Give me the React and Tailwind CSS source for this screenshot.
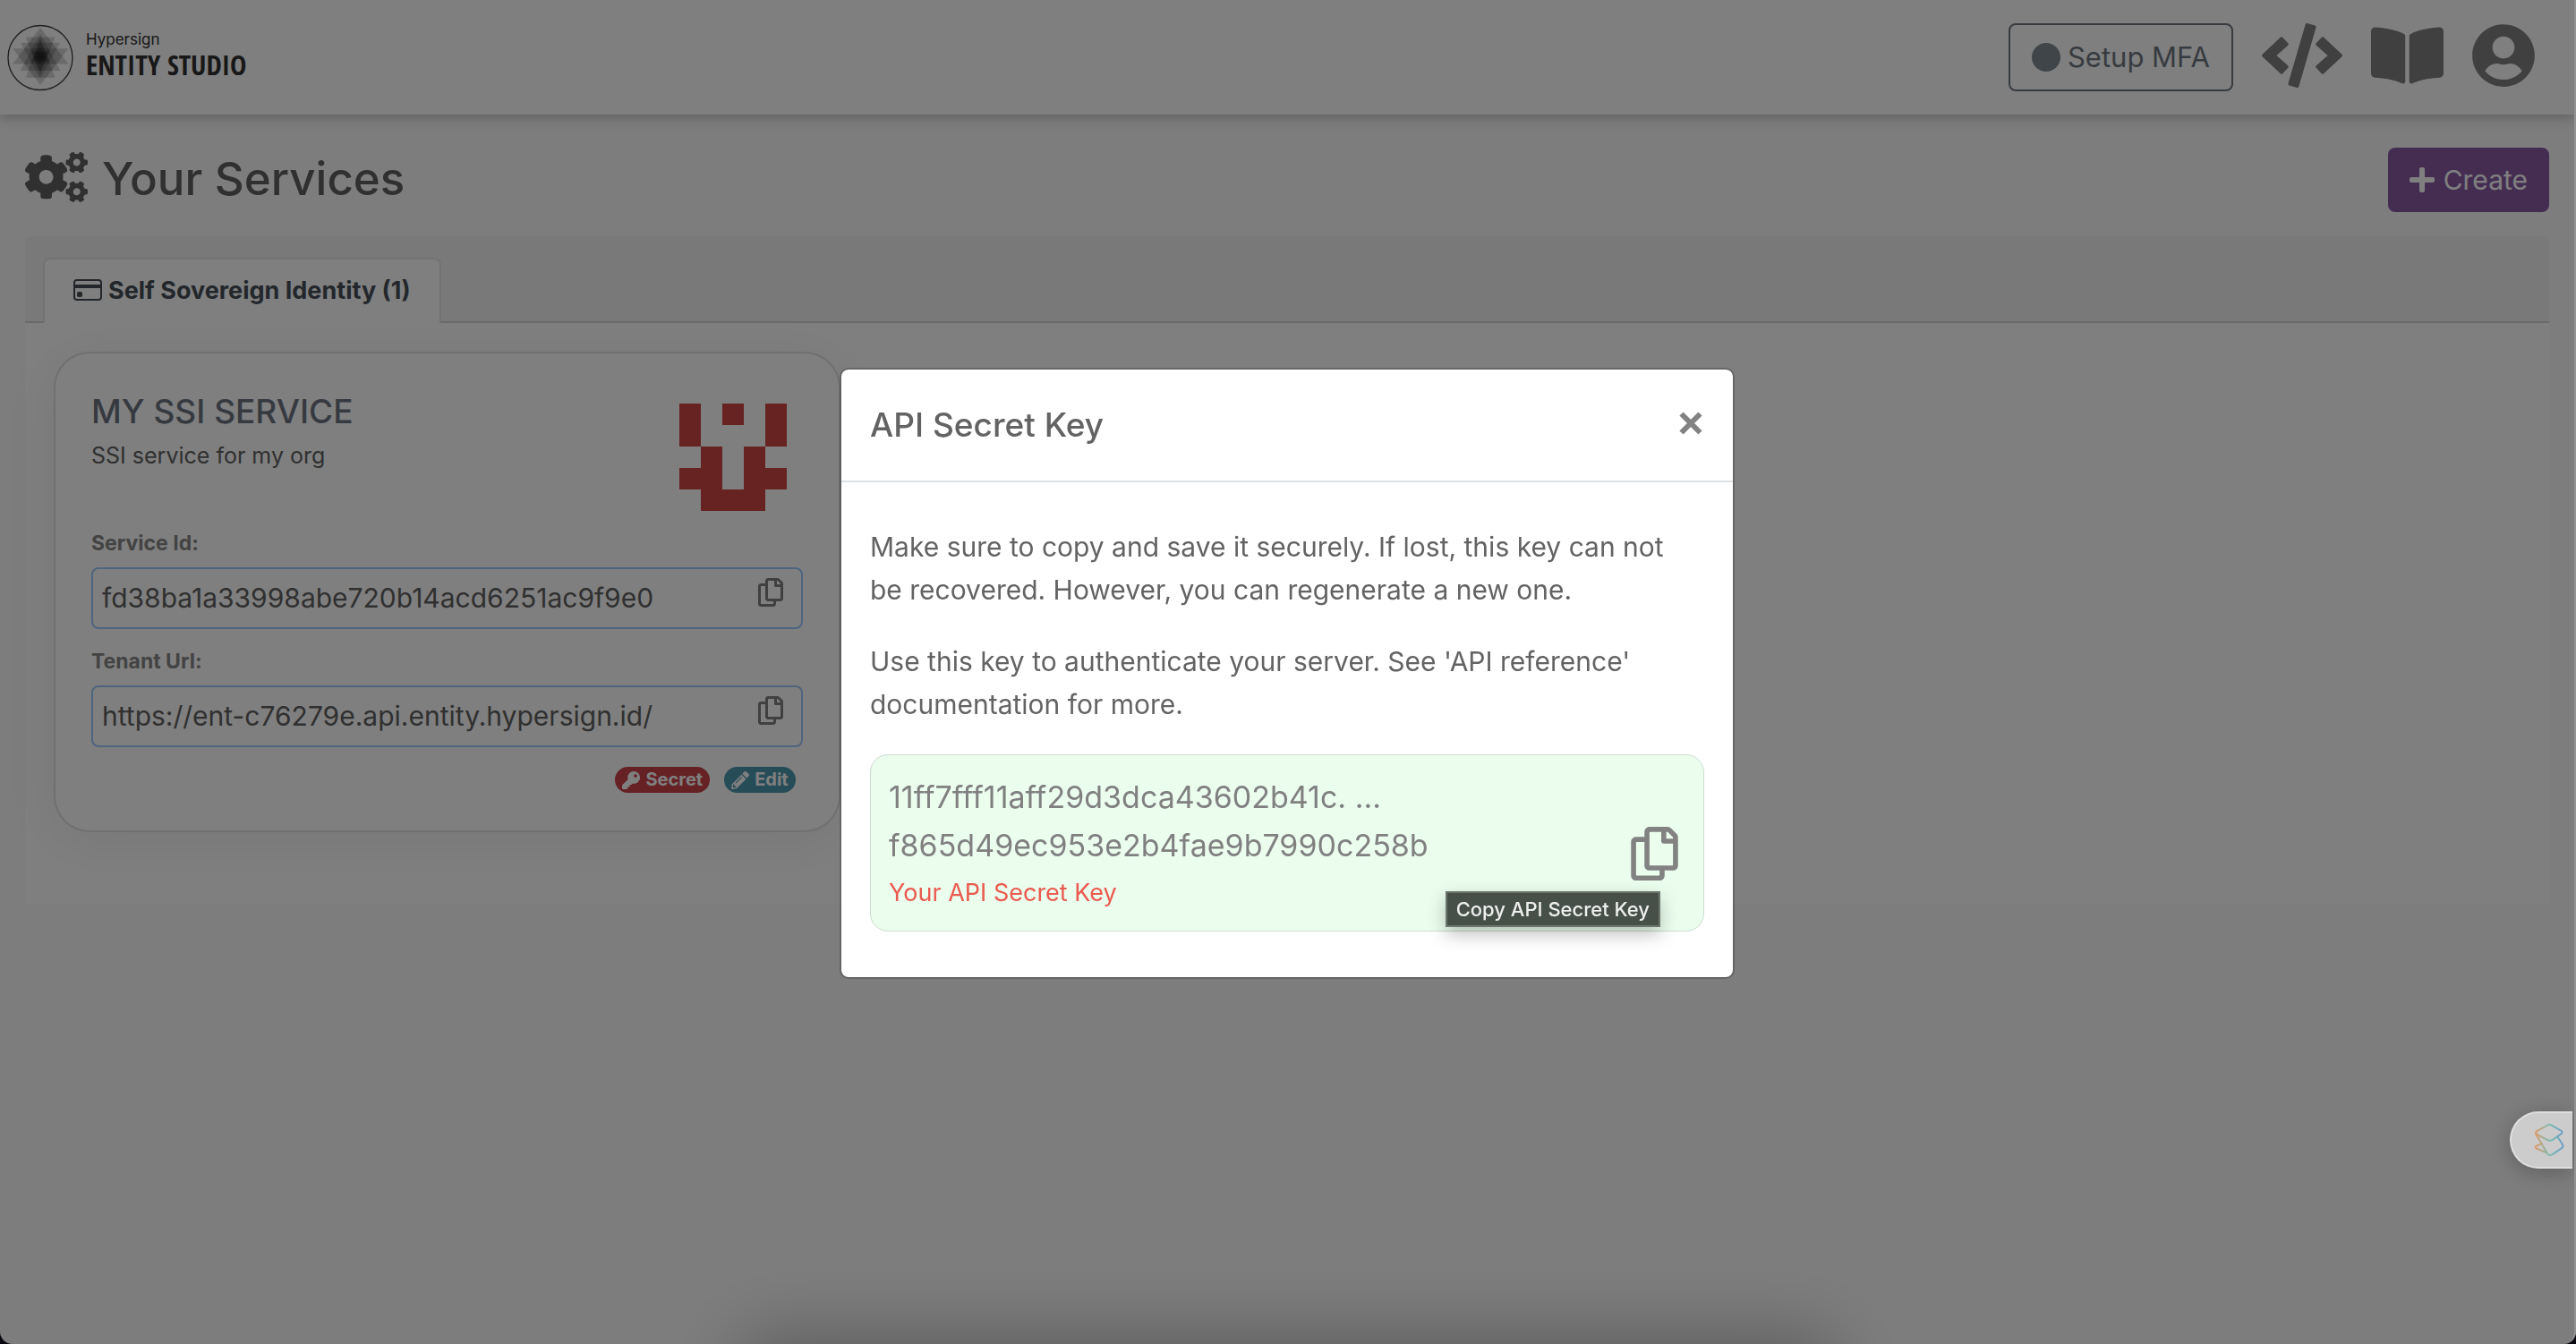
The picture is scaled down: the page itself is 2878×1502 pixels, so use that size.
import React from "react";
import {
  FaCode,
  FaBookOpen,
  FaUserCircle,
  FaCogs,
  FaPlus,
  FaRegCopy,
  FaKey,
  FaPencilAlt,
} from "react-icons/fa";
import { BsCreditCard } from "react-icons/bs";

function LogoMark() {
  return (
    <svg viewBox="23 35 224 226" className="h-[75px] w-[74px]" aria-hidden="true">
      <circle cx="135" cy="148" r="109" fill="none" stroke="#404040" strokeWidth="4" />
      <g fill="#000" fillOpacity="0.17">
        <path d="M135 46 230 169H42Z" />
        <path d="M135 240 42 117H230Z" />
        <path d="M135 66 203 192H67Z" />
        <path d="M135 219 68 97H202Z" />
        <path d="M135 78 185 215H86Z" />
        <path d="M135 206 86 78H185Z" />
        <path d="M135 88 166 162H104Z" />
        <path d="M135 196 104 126H166Z" />
        <path d="M135 108 156 156H114Z" />
        <path d="M135 176 114 130H156Z" />
      </g>
    </svg>
  );
}

const IDENTICON = ["10101", "10001", "01010", "11011", "01110"];

function Identicon() {
  return (
    <svg
      viewBox="0 0 5 5"
      shapeRendering="crispEdges"
      className="mt-3 mr-[18px] size-[120px] shrink-0"
      fill="#ce4642"
      aria-hidden="true"
    >
      {IDENTICON.flatMap((row, y) =>
        [...row].map((cell, x) =>
          cell === "1" ? <rect key={`${x}-${y}`} x={x} y={y} width="1" height="1" /> : null
        )
      )}
    </svg>
  );
}

function Navbar() {
  return (
    <header className="relative flex h-32 items-center justify-between bg-white pr-11 pl-2 shadow-[0_4px_12px_rgba(0,0,0,0.22)]">
      <a href="#home" className="flex items-center gap-3.5">
        <LogoMark />
        <span className="flex flex-col text-[#303030]">
          <span className="text-[17px] leading-4">Hypersign</span>
          <span className="font-['Open_Sans_Condensed','Roboto_Condensed','Open_Sans',sans-serif] text-[31px] leading-10 font-bold">
            ENTITY STUDIO
          </span>
        </span>
      </a>
      <nav className="flex items-center gap-8 text-[#808080]">
        <button
          type="button"
          className="flex items-center gap-2 rounded-lg border-2 border-[#6e7680] px-6 py-3 text-[31px] leading-[48px] text-[#6e7680]"
        >
          <span className="size-8 rounded-full bg-[#7e8a90]" />
          Setup MFA
        </button>
        <a href="#api" aria-label="API reference" className="mb-1">
          <FaCode className="h-[72px] w-[90px]" />
        </a>
        <a href="#docs" aria-label="Documentation" className="mb-1">
          <FaBookOpen className="h-[72px] w-[81px]" />
        </a>
        <a href="#account" aria-label="Account" className="mb-1">
          <FaUserCircle className="h-[72px] w-[70px]" />
        </a>
      </nav>
    </header>
  );
}

function CopyField({ id, label, value }) {
  return (
    <div className="mt-[18px]">
      <label htmlFor={id} className="block text-[23px] leading-9 font-bold text-[#868686]">
        {label}
      </label>
      <div className="mt-[9px] flex h-[69px] items-start rounded-lg border-2 border-[#9ec8ff] pr-5 pl-2.5">
        <input
          id={id}
          readOnly
          value={value}
          className="h-full min-w-0 flex-1 bg-transparent pb-0.5 text-[30px] text-[#606060] outline-none"
        />
        <button type="button" aria-label={`Copy ${label}`} className="mt-2.5 text-[#808080]">
          <FaRegCopy className="h-8 w-7" />
        </button>
      </div>
    </div>
  );
}

function ServiceCard() {
  return (
    <article className="rounded-[40px] border-2 border-black/12 bg-white px-10 pt-[44px] pb-[42px] shadow-[0_10px_60px_rgba(0,30,10,0.07)]">
      <div className="flex items-start justify-between">
        <div>
          <h2 className="text-[37px] leading-[42px] font-medium text-[#6c7480]">MY SSI SERVICE</h2>
          <p className="mt-[10px] text-[25px] leading-9 text-[#606060]">SSI service for my org</p>
        </div>
        <Identicon />
      </div>
      <CopyField id="service-id" label="Service Id:" value="fd38ba1a33998abe720b14acd6251ac9f9e0" />
      <CopyField
        id="tenant-url"
        label="Tenant Url:"
        value="https://ent-c76279e.api.entity.hypersign.id/"
      />
      <div className="mt-[22px] mr-2 flex justify-end gap-4 text-[20px] leading-[29px] font-bold text-white">
        <button type="button" className="flex items-center gap-1.5 rounded-full bg-[#ca4248] px-2">
          <FaKey className="size-5" />
          Secret
        </button>
        <button type="button" className="flex items-center gap-1.5 rounded-full bg-[#4c98b0] px-2">
          <FaPencilAlt className="size-5" />
          Edit
        </button>
      </div>
    </article>
  );
}

function Services() {
  return (
    <main className="px-[28px] pt-[37px]">
      <div className="flex h-[72px] items-center justify-between">
        <h1 className="flex items-center gap-4 pb-0.5 text-[51px] font-medium text-[#606060]">
          <FaCogs className="mb-1 h-[56px] w-[70px]" />
          Your Services
        </h1>
        <button
          type="button"
          className="flex h-[72px] items-center gap-2.5 rounded-lg bg-[#8a5aa4] px-6 text-[30px] text-white"
        >
          <FaPlus className="h-8 w-7" />
          Create
        </button>
      </div>
      <section className="mt-[27px] rounded-t-lg bg-white">
        <div role="tablist" className="flex rounded-t-lg border-b-2 border-black/12 bg-black/5 px-5 pt-6">
          <button
            type="button"
            role="tab"
            aria-selected="true"
            className="-mb-0.5 flex h-[73px] items-center gap-[7px] rounded-t-lg border-2 border-b-0 border-[#e4e6e8] bg-white px-8 text-[27px] font-bold text-[#464e56]"
          >
            <BsCreditCard className="mb-1 size-8" />
            Self Sovereign Identity (1)
          </button>
        </div>
        <div className="grid grid-cols-3 gap-[60px] px-8 pt-8 pb-20">
          <ServiceCard />
        </div>
      </section>
    </main>
  );
}

function SecretModal() {
  return (
    <div className="fixed inset-0 flex items-center justify-center bg-black/50 pt-[3px] pr-0.5">
      <div
        role="dialog"
        aria-modal="true"
        aria-labelledby="modal-title"
        className="w-full max-w-[1000px] rounded-[10px] border-2 border-black/20 bg-white bg-clip-padding text-[#636363]"
      >
        <div className="flex h-[126px] items-center justify-between border-b-2 border-[#dee2e6] px-8">
          <h2 id="modal-title" className="text-[37px] font-medium">
            API Secret Key
          </h2>
          <button type="button" aria-label="Close" className="mr-0.5 mb-1 text-[#828282]">
            <svg viewBox="0 0 26 26" className="size-[26px]" stroke="currentColor" strokeWidth="6">
              <path d="M2.5 2.5 23.5 23.5M23.5 2.5 2.5 23.5" />
            </svg>
          </button>
        </div>
        <div className="flex flex-col gap-8 px-8 pt-12 pb-[51px] text-[30px] leading-[48px]">
          <p className="pr-8">
            Make sure to copy and save it securely. If lost, this key can not be recovered. However,
            you can regenerate a new one.
          </p>
          <p className="pr-8">
            Use this key to authenticate your server. See 'API reference' documentation for more.
          </p>
          <div className="flex items-center justify-between rounded-[20px] border border-[#cbdccf] bg-[#ebfeee] py-5 pr-7 pl-5">
            <div>
              <p className="text-[34px] leading-[54px] text-[#808080]">
                11ff7fff11aff29d3dca43602b41c. ...
                <br />
                f865d49ec953e2b4fae9b7990c258b
              </p>
              <p className="mt-1 text-[27px] leading-[44px] text-[#ea5a4f]">Your API Secret Key</p>
            </div>
            <div className="relative mt-6">
              <button type="button" aria-label="Copy API Secret Key" className="block text-[#828282]">
                <FaRegCopy className="h-[60px] w-[53px]" />
              </button>
              <span
                role="tooltip"
                className="absolute top-[72px] right-5 border-2 border-[#6b756d] bg-[#465049] px-2.5 text-[22px] leading-9 font-medium whitespace-nowrap text-[#eeeeee] shadow-[0_8px_20px_rgba(0,0,0,0.25)]"
              >
                Copy API Secret Key
              </span>
            </div>
          </div>
        </div>
      </div>
    </div>
  );
}

function FloatingWidget() {
  return (
    <button
      type="button"
      aria-label="Open assistant"
      className="fixed top-[1242px] right-1 flex h-16 w-[70px] items-center justify-end rounded-l-full border-2 border-r-0 border-[#dfdfdf] bg-[#cccccc] pr-[9px] shadow-[0_4px_24px_rgba(0,0,0,0.25)]"
    >
      <svg viewBox="211 165 103 113" className="h-[38px] w-[34px]" fill="none" aria-hidden="true">
        <defs>
          <linearGradient id="widget-ink" x1="211" y1="0" x2="314" y2="0" gradientUnits="userSpaceOnUse">
            <stop offset="0" stopColor="#e8935f" />
            <stop offset="0.5" stopColor="#7dbcae" />
            <stop offset="1" stopColor="#6a9ccb" />
          </linearGradient>
        </defs>
        <g stroke="url(#widget-ink)" strokeWidth="6" strokeLinejoin="round" strokeLinecap="round">
          <path d="M222 191 258 171Q264 168 270 171L304 191Q309 196 304 200L274 221Q266 226 258 222L222 203Q213 197 222 191Z" />
          <path d="M217 200 256 267Q262 276 271 272L304 250Q312 244 308 237L291 211" />
          <path d="M238 233 219 242Q213 246 219 250L252 264" />
        </g>
      </svg>
    </button>
  );
}

export default function App() {
  return (
    <div className="min-h-screen bg-[#08080f] font-['Inter',sans-serif]">
      <div className="min-h-screen bg-[#fafafa] pr-0.5">
        <Navbar />
        <Services />
      </div>
      <SecretModal />
      <FloatingWidget />
      <div className="pointer-events-none fixed inset-0 overflow-hidden rounded-b-[14px] border-r-2 border-[#929292] shadow-[0_0_0_20px_#08080f]">
        <div className="absolute top-full left-[29%] h-20 w-[42%] rounded-[20px] shadow-[0_0_80px_10px_rgba(0,0,0,0.26)]" />
      </div>
    </div>
  );
}
